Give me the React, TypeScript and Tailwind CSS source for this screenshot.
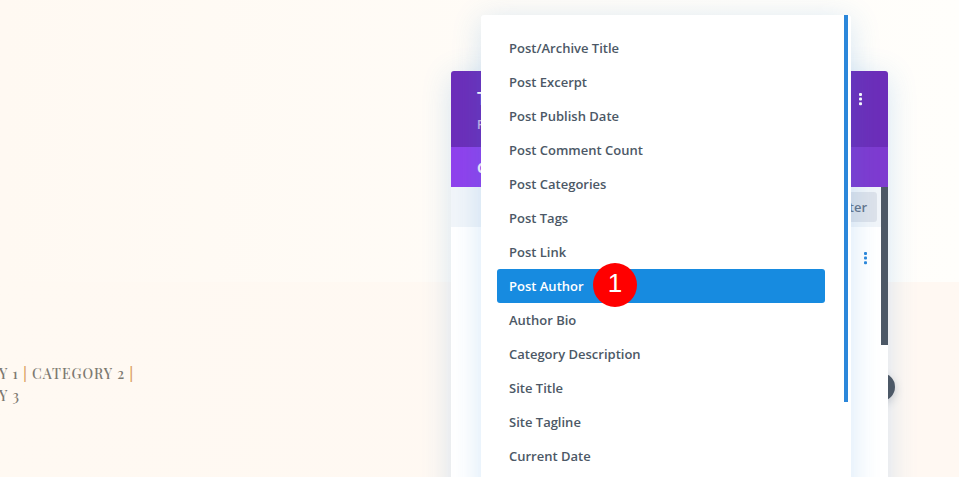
import { clsx } from "clsx";

const fields = [
  "Post/Archive Title",
  "Post Excerpt",
  "Post Publish Date",
  "Post Comment Count",
  "Post Categories",
  "Post Tags",
  "Post Link",
  "Post Author",
  "Author Bio",
  "Category Description",
  "Site Title",
  "Site Tagline",
  "Current Date",
];

function Dots({ className }: { className?: string }) {
  return (
    <svg width="3" height="13" viewBox="0 0 3 13" fill="currentColor" className={className}>
      <rect width="3" height="3" rx="1" />
      <rect y="4.6" width="3" height="3" rx="1" />
      <rect y="9.2" width="3" height="3" rx="1" />
    </svg>
  );
}

function PostMeta() {
  return (
    <div className="pt-[81px] font-['Playfair_Display','Liberation_Serif',serif] text-[14px] leading-[22px] font-medium tracking-[1px] text-[#7d7971] whitespace-nowrap">
      <p className="-ml-[1px]">
        Y 1 <span className="font-bold text-[#dba05f]">|</span> CATEGORY 2{" "}
        <span className="font-bold text-[#dba05f]">|</span>
      </p>
      <p className="-ml-[1px]">Y 3</p>
    </div>
  );
}

function SettingsModal() {
  return (
    <div className="absolute left-[451px] top-[71px] h-[440px] w-[437px] rounded-t-[3px] shadow-[0_5px_30px_rgba(43,135,218,0.2)]">
      {/* Close handle sticking out from behind the panel */}
      <div className="absolute top-[302px] -right-[7px] size-7 rounded-full bg-[#4c5866] shadow-[0_3px_8px_rgba(76,88,102,0.25)]" />
      <div className="relative flex h-full flex-col overflow-hidden rounded-t-[3px] bg-white">
        <header className="flex h-[76px] shrink-0 justify-between bg-[#6c2eb9] pl-[26px] pr-[26px] text-white">
          <div className="pt-[15px]">
            <h2 className="text-[18px] leading-6 font-semibold">Text Settings</h2>
            <p className="mt-[7px] text-[12px] leading-4 font-semibold text-white/65">Preset: Default</p>
          </div>
          <Dots className="mt-[22px]" />
        </header>
        <nav className="flex h-10 shrink-0 items-center gap-6 bg-gradient-to-r from-[#8f42ec] from-10% to-[#7e3bd0] to-90% pl-[26px] text-[14px] font-bold text-white/90">
          <span>Content</span>
          <span>Design</span>
          <span>Advanced</span>
        </nav>
        <div className="flex min-h-0 flex-1">
          <div className="flex-1">
            <div className="flex h-10 items-center justify-end bg-[#f1f5f9] pr-1">
              <button className="h-[30px] w-[76px] rounded-[3px] bg-[#dde2ea] pt-[2px] pr-[10px] text-right text-[13px] font-semibold text-[#66758b]">
                Filter
              </button>
            </div>
            <div className="flex justify-end pt-[25px] pr-[14px] text-[#2b87da]">
              <Dots />
            </div>
          </div>
          <div className="w-[7px]">
            <div className="h-[158px] bg-[#4c5866]" />
          </div>
        </div>
      </div>
    </div>
  );
}

function DynamicContentMenu() {
  return (
    <div className="absolute left-[481px] top-[15px] flex h-[500px] w-[370px] rounded-t-[3px] bg-white pr-[3px] pl-4 shadow-[0_5px_30px_rgba(43,135,218,0.2)]">
      <ul className="w-[328px] pt-4">
        {fields.map((field) => (
          <li
            key={field}
            className={clsx(
              "flex h-[34px] items-center rounded-[3px] pt-[2px] pl-3 text-[13px] font-semibold",
              field === "Post Author" ? "bg-[#178be0] text-white" : "text-[#4c5866]",
            )}
          >
            {field}
            {field === "Post Author" && (
              <span className="ml-[9px] flex size-11 shrink-0 -translate-y-[2px] items-start justify-center rounded-full bg-[#ff0000] pt-[4px] pl-px font-['Liberation_Sans',Arial,sans-serif] text-[26px] leading-8 font-normal">
                1
              </span>
            )}
          </li>
        ))}
      </ul>
      <div className="ml-auto h-[387px] w-1 bg-[#2b87da]" />
    </div>
  );
}

export default function App() {
  return (
    <div className="relative h-[477px] w-[959px] overflow-hidden font-['Open_Sans',sans-serif]">
      <div className="h-[282px] bg-gradient-to-r from-[#fff9f2] to-[#fffefb]" />
      <div className="h-[195px] bg-gradient-to-r from-[#fff9f2] to-[#fff8f2]">
        <PostMeta />
      </div>
      <SettingsModal />
      <DynamicContentMenu />
    </div>
  );
}
